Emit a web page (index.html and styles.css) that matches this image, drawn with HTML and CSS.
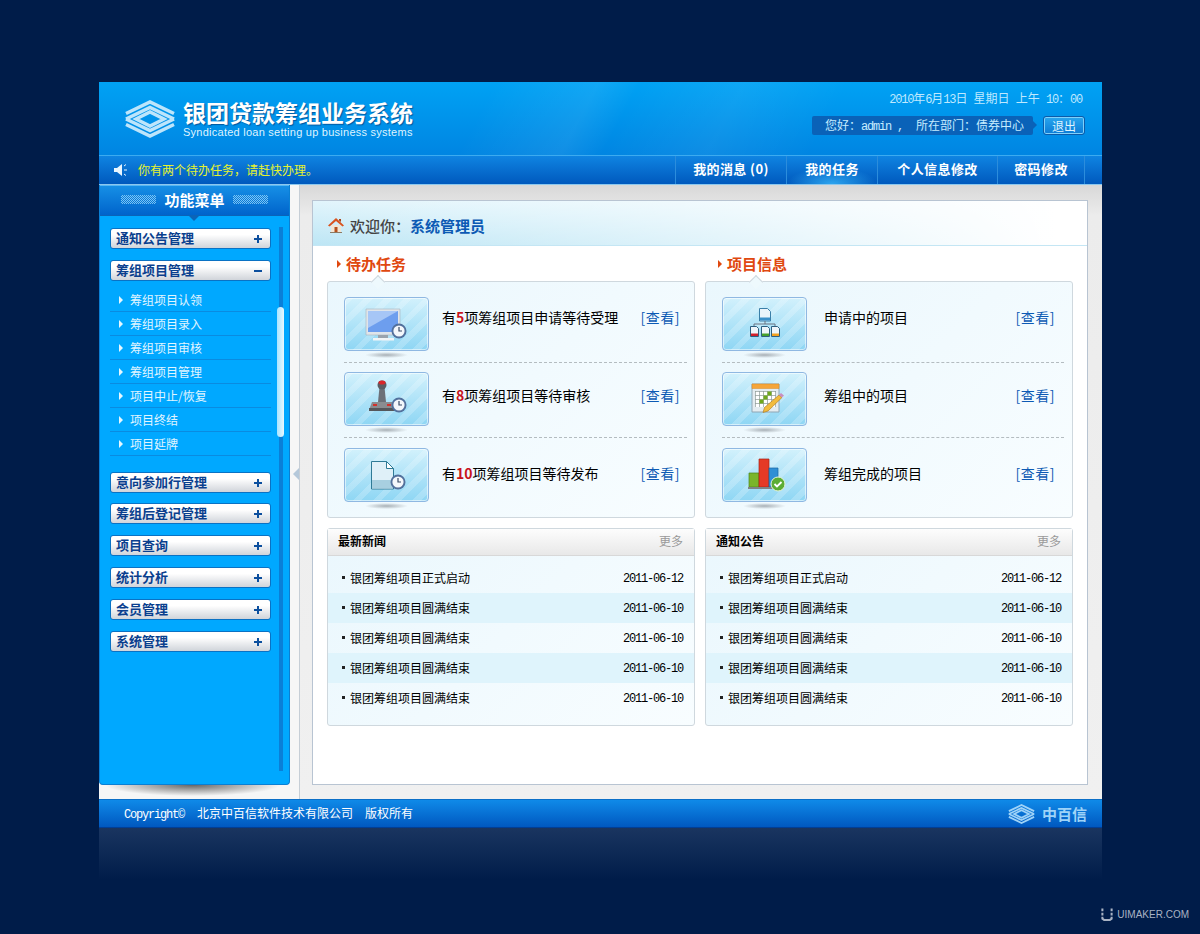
FILE: index.html
```html
<!DOCTYPE html>
<html lang="zh-CN">
<head>
    <meta charset="UTF-8">
    <title>银团贷款筹组业务系统</title>
    <link rel="stylesheet" href="styles.css">
</head>
<body>
    <svg class="defs" width="0" height="0">
        <symbol id="logo" viewBox="0 0 50 38">
            <g fill="none" stroke="currentColor" stroke-width="3.400">
                <path d="M1 13.500L25 2l24 11.500"/>
                <path d="M1 19L25 7.500 49 19"/>
                <path d="M1 24.500L25 36l24-11.500"/>
                <path d="M1 19l24 11.500L49 19"/>
                <path d="M11 19l14-7 14 7-14 7z"/>
            </g>
        </symbol>
        <symbol id="clock" viewBox="0 0 16 16">
            <circle cx="8" cy="8" r="7.500" fill="#52709c"/>
            <circle cx="8" cy="8" r="5.600" fill="#f4f7fb"/>
            <path d="M8 4v4h3" fill="none" stroke="#3a4c68" stroke-width="1.200"/>
        </symbol>
    </svg>

    <div class="app">
        <header class="top">
            <a class="brand">
                <svg class="brand-logo"><use href="#logo"/></svg>
                <div>
                    <div class="brand-name">银团贷款筹组业务系统</div>
                    <div class="brand-en">Syndicated loan setting up business systems</div>
                </div>
            </a>
            <div class="top-right">
                <div class="date"><span class="num">2010</span>年<span class="num">6</span>月<span class="num">13</span>日 星期日 上午 <span class="num">10</span>：<span class="num">00</span></div>
                <div class="user-row">
                    <div class="user">您好：<span class="num">admin ,</span><span class="dept">所在部门：债券中心</span></div>
                    <button class="logout">退出</button>
                </div>
            </div>
        </header>

        <nav class="bar">
            <div class="notice">
                <svg class="speaker" viewBox="0 0 14 14"><path d="M0 5h3l5-4v12l-5-4H0z" fill="#eaf6ff"/><path d="M10 3l2-1.500M10 7h3M10 11l2 1.500" stroke="#eaf6ff" fill="none"/></svg>
                你有两个待办任务，请赶快办理。
            </div>
            <div class="tabs">
                <a class="tab tab-msg">我的消息 (0)</a>
                <a class="tab tab-task active">我的任务</a>
                <a class="tab tab-info">个人信息修改</a>
                <a class="tab tab-pwd">密码修改</a>
            </div>
        </nav>

        <div class="middle">
            <aside class="side">
                <div class="side-box">
                    <div class="side-title"><i class="dots"></i>功能菜单<i class="dots"></i></div>
                    <div class="side-body">
                        <div class="menu">
                            <div class="menu-item">通知公告管理<b class="plus"></b></div>
                            <div class="menu-item">筹组项目管理<b class="minus"></b></div>
                            <ul class="sub">
                                <li>筹组项目认领</li>
                                <li>筹组项目录入</li>
                                <li>筹组项目审核</li>
                                <li>筹组项目管理</li>
                                <li>项目中止/恢复</li>
                                <li>项目终结</li>
                                <li>项目延牌</li>
                            </ul>
                            <div class="menu-item tight">意向参加行管理<b class="plus"></b></div>
                            <div class="menu-item">筹组后登记管理<b class="plus"></b></div>
                            <div class="menu-item">项目查询<b class="plus"></b></div>
                            <div class="menu-item">统计分析<b class="plus"></b></div>
                            <div class="menu-item">会员管理<b class="plus"></b></div>
                            <div class="menu-item">系统管理<b class="plus"></b></div>
                        </div>
                        <div class="track"><div class="thumb"></div></div>
                    </div>
                </div>
                <div class="side-shadow"></div>
            </aside>

            <div class="split"><i class="split-arrow"></i></div>

            <main class="content">
                <div class="panel">
                    <div class="welcome">
                        <svg class="house" viewBox="0 0 16 16">
                            <path d="M3 8h10v8H3z" fill="#f3e6d4"/>
                            <path d="M6.500 10h3v6h-3z" fill="#b5501d"/>
                            <path d="M0 8.500L8 1l8 7.500-1.500 1L8 4 1.500 9.500z" fill="#d9531e"/>
                            <path d="M11 2h2v3l-2-1.500z" fill="#a8431a"/>
                            <path d="M2 15h12v1H2z" fill="#8d7a63"/>
                        </svg>
                        欢迎你：<span class="who">系统管理员</span>
                    </div>

                    <div class="cols">
                        <section>
                            <h3 class="sec-title">待办任务</h3>
                            <div class="box box-task">
                                <div class="row">
                                    <div class="tile">
                                        <svg viewBox="0 0 85 54">
                                            <path d="M22 12h34v26H22z" fill="#dfe5ea" stroke="#a8b2bc" stroke-width=".6"/>
                                            <path d="M24 14h30v21H24z" fill="#6d9eee"/>
                                            <path d="M24 14h30L24 31z" fill="#a6c6f6"/>
                                            <path d="M34 38h10v3H34z" fill="#9aa4ae"/>
                                            <path d="M29 41h21v2.500H29z" fill="#f2f5f7"/>
                                            <use href="#clock" x="47" y="26" width="16" height="16"/>
                                        </svg>
                                    </div>
                                    <div class="txt up-6">有<em>5</em>项筹组项目申请等待受理</div>
                                    <a class="view up-6">[查看]</a>
                                </div>
                                <div class="row">
                                    <div class="tile">
                                        <svg viewBox="0 0 85 54">
                                            <path d="M25 38l3-8h20l3 8z" fill="#8a8c90"/>
                                            <path d="M25 36h26v3H25z" fill="#55575b"/>
                                            <path d="M29 32h4v2h-4zM43 32h4v2h-4z" fill="#d2312c"/>
                                            <path d="M35.500 15h5l1.500 15h-8z" fill="#6c7078"/>
                                            <circle cx="38" cy="13" r="4.500" fill="#5a5d63"/>
                                            <ellipse cx="38" cy="10.500" rx="3.500" ry="2" fill="#d8262a"/>
                                            <use href="#clock" x="47" y="25" width="16" height="16"/>
                                        </svg>
                                    </div>
                                    <div class="txt up-3">有<em>8</em>项筹组项目等待审核</div>
                                    <a class="view up-3">[查看]</a>
                                </div>
                                <div class="row">
                                    <div class="tile">
                                        <svg viewBox="0 0 85 54">
                                            <path d="M27.500 13.500h15l7 7v20.500h-22z" fill="#dff0f8" stroke="#2f7a96"/>
                                            <path d="M28 32h21v8.500H28z" fill="#a8cfe0"/>
                                            <path d="M42.500 13.500v7h7z" fill="#fff" stroke="#2f7a96"/>
                                            <use href="#clock" x="46" y="26" width="16" height="16"/>
                                        </svg>
                                    </div>
                                    <div class="txt up-1">有<em>10</em>项筹组项目等待发布</div>
                                    <a class="view up-1">[查看]</a>
                                </div>
                            </div>
                        </section>

                        <section class="sec-info">
                            <h3 class="sec-title">项目信息</h3>
                            <div class="box box-info">
                                <div class="row">
                                    <div class="tile">
                                        <svg viewBox="0 0 85 54">
                                            <path d="M37.500 11.500h8l3 3v9.500h-11z" fill="#eaf3fa" stroke="#3b7fa8"/>
                                            <path d="M38 20.500h10v3H38z" fill="#3b8fc8"/>
                                            <path d="M43 24v3M32 30v-3h21v3" fill="none" stroke="#6b7280"/>
                                            <path d="M28.500 29.500h6l2 2v8h-8z" fill="#eef5fa" stroke="#2d5f80"/>
                                            <path d="M39.500 29.500h6l2 2v8h-8z" fill="#eef5fa" stroke="#2d5f80"/>
                                            <path d="M49.500 29.500h6l2 2v8h-8z" fill="#eef5fa" stroke="#2d5f80"/>
                                            <path d="M29 36.500h7v2.500h-7z" fill="#d0202c"/>
                                            <path d="M40 36.500h7v2.500h-7z" fill="#46a02c"/>
                                            <path d="M50 36.500h7v2.500h-7z" fill="#f0a020"/>
                                        </svg>
                                    </div>
                                    <div class="txt up-6">申请中的项目</div>
                                    <a class="view up-6">[查看]</a>
                                </div>
                                <div class="row">
                                    <div class="tile">
                                        <svg viewBox="0 0 85 54">
                                            <path d="M30 12h27v28H30z" fill="#e4ecf0" stroke="#8fa6b4"/>
                                            <path d="M30 12h27v4.500H30z" fill="#f5a53a" stroke="#d88a20" stroke-width=".5"/>
                                            <path d="M33 19h21v16H33z" fill="#fff"/>
                                            <path d="M33 19.500h21M33 23.500h21M33 27.500h21M33 31.500h21M33.500 19v16M37.500 19v16M41.500 19v16M45.500 19v16M49.500 19v16M53.500 19v16" stroke="#8c9a96" stroke-width=".7"/>
                                            <path d="M37.500 27.500h4v4h-4zM41.500 23.500h4v4h-4zM45.500 19.500h4v4h-4z" fill="#6fa81c"/>
                                            <path d="M57 23l3 2.500L46 39l-5 1.500 1.500-5z" fill="#f2bb3c" stroke="#a9761c" stroke-width=".6"/>
                                            <path d="M57 23l2-2 3 2.500-2 2z" fill="#c98fc0"/>
                                        </svg>
                                    </div>
                                    <div class="txt up-3">筹组中的项目</div>
                                    <a class="view up-3">[查看]</a>
                                </div>
                                <div class="row">
                                    <div class="tile">
                                        <svg viewBox="0 0 85 54">
                                            <path d="M27 25h10v14H27z" fill="#7ab52a" stroke="#4c8418" stroke-width=".7"/>
                                            <path d="M37 11h10v28H37z" fill="#e53a26" stroke="#a92314" stroke-width=".7"/>
                                            <path d="M47 20h9v19h-9z" fill="#2f8fd6" stroke="#1b64a0" stroke-width=".7"/>
                                            <path d="M26 39h28v2H26z" fill="#7d8587"/>
                                            <circle cx="56" cy="36" r="7" fill="#5cad33" stroke="#e6f3da"/>
                                            <path d="M52.500 36l2.500 2.500 4.500-4.500" fill="none" stroke="#fff" stroke-width="1.800"/>
                                        </svg>
                                    </div>
                                    <div class="txt up-1">筹组完成的项目</div>
                                    <a class="view up-1">[查看]</a>
                                </div>
                            </div>
                        </section>

                        <section class="news">
                            <div class="news-head"><b>最新新闻</b><a>更多</a></div>
                            <ul class="news-list">
                                <li><span>银团筹组项目正式启动</span><time>2011-06-12</time></li>
                                <li><span>银团筹组项目圆满结束</span><time>2011-06-10</time></li>
                                <li><span>银团筹组项目圆满结束</span><time>2011-06-10</time></li>
                                <li><span>银团筹组项目圆满结束</span><time>2011-06-10</time></li>
                                <li><span>银团筹组项目圆满结束</span><time>2011-06-10</time></li>
                            </ul>
                        </section>

                        <section class="news">
                            <div class="news-head"><b>通知公告</b><a>更多</a></div>
                            <ul class="news-list">
                                <li><span>银团筹组项目正式启动</span><time>2011-06-12</time></li>
                                <li><span>银团筹组项目圆满结束</span><time>2011-06-10</time></li>
                                <li><span>银团筹组项目圆满结束</span><time>2011-06-10</time></li>
                                <li><span>银团筹组项目圆满结束</span><time>2011-06-10</time></li>
                                <li><span>银团筹组项目圆满结束</span><time>2011-06-10</time></li>
                            </ul>
                        </section>
                    </div>
                </div>
            </main>
        </div>

        <footer class="foot">
            <div class="foot-text"><span class="num">Copyright©</span><span class="corp">北京中百信软件技术有限公司</span><span class="rights">版权所有</span></div>
            <div class="foot-brand">
                <svg class="foot-logo"><use href="#logo"/></svg>
                <span>中百信</span>
            </div>
        </footer>
    </div>

    <div class="reflect"></div>

    <div class="mark">
        <svg class="mark-u" viewBox="0 0 13 13"><path d="M1.500 0v3M1.500 4.500v3M1.500 9v2l2 1.500h6l2-1.500V9M11.500 7.500v-3M11.500 3V0" fill="none" stroke="#a9b3c4" stroke-width="2.200"/></svg>
        UIMAKER.COM
    </div>
</body>
</html>
```

FILE: styles.css
```css
* {
    box-sizing: border-box;
}
html, body {
    margin: 0;
    height: 100%;
}
body {
    padding-top: 82px;
    background: #001c49;
    color: #000;
    font-family: "Noto Sans CJK SC", "Liberation Sans", sans-serif;
    font-size: 12px;
    overflow: hidden;
}
ul {
    list-style: none;
    margin: 0;
    padding: 0;
}
.defs {
    display: block;
    height: 0;
}
.num {
    font-family: "Liberation Mono", monospace;
    font-size: 12px;
    line-height: 1;
    letter-spacing: -1.2px;
}

.app {
    width: 1003px;
    margin-left: 99px;
}

/* header */
.top {
    height: 73px;
    display: flex;
    justify-content: space-between;
    background:
        linear-gradient(118deg, transparent 38%, rgba(255,255,255,0.07) 48%, transparent 52%, rgba(255,255,255,0.06) 62%, transparent 72%),
        linear-gradient(#00a2f4, #0085e2);
}
.brand {
    display: flex;
    padding: 18px 0 0 26px;
    color: #fff;
}
.brand-logo {
    width: 50px;
    height: 38px;
    margin-right: 8px;
    color: #bde5fb;
}
.brand-name {
    height: 26px;
    font-size: 23px;
    font-weight: 700;
    line-height: 25px;
    text-shadow: 1px 1px 1px rgba(0,50,110,0.6);
}
.brand-en {
    font-family: "Liberation Sans", sans-serif;
    font-size: 11px;
    letter-spacing: 0.25px;
    line-height: 12px;
    color: #dff3ff;
}
.top-right {
    display: flex;
    flex-direction: column;
    align-items: flex-end;
    padding: 8px 17px 0 0;
}
.date {
    height: 16px;
    margin-right: 3px;
    color: #bfe9ff;
    line-height: 16px;
    word-spacing: 3.5px;
}
.user-row {
    display: flex;
    margin-top: 10px;
}
.user {
    position: relative;
    width: 221px;
    height: 19px;
    padding-left: 13px;
    border-radius: 2px;
    background: #0a62b8;
    color: #c6ecff;
    line-height: 18px;
}
.user::after {
    content: "";
    position: absolute;
    right: -4px;
    top: 5px;
    border-left: 4px solid #0a62b8;
    border-top: 4px solid transparent;
    border-bottom: 4px solid transparent;
}
.dept {
    margin-left: 13px;
}
.logout {
    width: 42px;
    height: 19px;
    margin-left: 10px;
    padding: 0;
    border: 1px solid #0c5aa8;
    border-radius: 3px;
    background: linear-gradient(#2aa6ee, #0b7bd6);
    box-shadow: inset 0 0 0 1px #7fd0fa;
    color: #dff4ff;
    font: inherit;
    line-height: 15px;
}

/* notice and tabs */
.bar {
    height: 30px;
    display: flex;
    justify-content: space-between;
    border-top: 1px solid #3cabf0;
    border-bottom: 1px solid #8cc8ee;
    background: linear-gradient(#0f84e2, #0059bd);
}
.notice {
    display: flex;
    align-items: center;
    padding: 0 0 1px 15px;
    color: #e6f32e;
}
.speaker {
    width: 14px;
    height: 14px;
    margin-right: 10px;
}
.tabs {
    display: flex;
    padding-right: 17px;
}
.tab {
    display: flex;
    align-items: center;
    justify-content: center;
    padding-bottom: 3px;
    border-left: 1px solid #2c8ddc;
    color: #fff;
    font-size: 13px;
    font-weight: 700;
    letter-spacing: 0.4px;
}
.tab:last-child {
    border-right: 1px solid #2c8ddc;
}
.tab-msg { width: 111px; }
.tab-task { width: 91px; }
.tab-info { width: 120px; }
.tab-pwd { width: 88px; }
.tab.active {
    background: radial-gradient(ellipse 50% 60% at 50% 100%, rgba(60,190,255,0.75), transparent);
}

/* sidebar */
.middle {
    display: flex;
    height: 614px;
}
.side {
    width: 191px;
    background: #f6f6f6;
}
.side-box {
    height: 600px;
    border: 1px solid #0a7fd4;
    border-top: 0;
    border-radius: 0 0 4px 4px;
    background: #00a8ff;
}
.side-title {
    position: relative;
    height: 31px;
    display: flex;
    align-items: center;
    justify-content: center;
    gap: 8px;
    padding-bottom: 2px;
    border-top: 1px solid #58b7f4;
    border-bottom: 1px solid #0b64b8;
    background: linear-gradient(#168fe6, #0064cb);
    color: #fff;
    font-size: 15px;
    font-weight: 700;
}
.side-title::after {
    content: "";
    position: absolute;
    left: 89px;
    bottom: -6px;
    width: 0;
    border-top: 5px solid #0b64b8;
    border-left: 5px solid transparent;
    border-right: 5px solid transparent;
}
.dots {
    width: 35px;
    height: 9px;
    background: repeating-conic-gradient(rgba(150,215,250,0.8) 0 25%, transparent 0 50%) 0 0 / 2px 2px;
}
.side-body {
    display: flex;
    padding: 12px 0 0 10px;
}
.menu {
    width: 161px;
}
.menu-item {
    height: 21px;
    display: flex;
    align-items: center;
    justify-content: space-between;
    margin-bottom: 11px;
    padding: 0 8px 2px 5px;
    border: 1px solid #0a72c4;
    border-radius: 3px;
    background: linear-gradient(#fff 30%, #d0d4da);
    color: #0a3f8e;
    font-size: 13px;
    font-weight: 700;
}
.menu-item.tight {
    margin-bottom: 10px;
}
.plus, .minus {
    position: relative;
    top: 1px;
    width: 8px;
    height: 2px;
    background: #0c4f9e;
}
.plus::after {
    content: "";
    position: absolute;
    left: 3px;
    top: -3px;
    width: 2px;
    height: 8px;
    background: #0c4f9e;
}
.sub {
    margin: -4px 0 16px;
}
.sub li {
    position: relative;
    height: 24px;
    padding-left: 20px;
    border-bottom: 1px solid #0a8be0;
    color: #e0f5ff;
    line-height: 23px;
}
.sub li::before {
    content: "";
    position: absolute;
    left: 9px;
    top: 8px;
    border-left: 4px solid #e6f7ff;
    border-top: 4px solid transparent;
    border-bottom: 4px solid transparent;
}
.track {
    width: 4px;
    height: 544px;
    margin: -1px 0 0 8px;
    background: #0a7fd8;
}
.thumb {
    width: 7px;
    height: 130px;
    margin: 80px 0 0 -2px;
    border-radius: 4px;
    background: linear-gradient(90deg, #a9e4ff, #eaf9ff);
}
.side-shadow {
    height: 11px;
    margin: 0 10px 0 6px;
    background: radial-gradient(ellipse 50% 100% at 50% 0, #666, transparent);
}
.split {
    position: relative;
    width: 10px;
    background: #f6f6f6;
    border-right: 1px solid #c6ced6;
}
.split-arrow {
    position: absolute;
    left: 3px;
    top: 283px;
    border-right: 6px solid #b4c8da;
    border-top: 6px solid transparent;
    border-bottom: 6px solid transparent;
}

/* main */
.content {
    flex: 1;
    padding: 15px 14px 14px 12px;
    background: linear-gradient(#d8d8d8, #ececec 5%, #f0f0f0);
}
.panel {
    height: 100%;
    border: 1px solid #b8c4d2;
    background: #fff;
}
.welcome {
    height: 45px;
    display: flex;
    align-items: center;
    padding: 4px 0 0 15px;
    border-bottom: 1px solid #c4e6f4;
    background:
        linear-gradient(90deg, transparent, #fff 96%),
        linear-gradient(#e2f5fc, #bde6f5);
    color: #444;
    font-size: 15px;
    font-weight: 500;
}
.house {
    width: 16px;
    height: 16px;
    margin-right: 6px;
}
.who {
    color: #0c5ab4;
    font-weight: 700;
}
.cols {
    display: grid;
    grid-template-columns: 368px 368px;
    column-gap: 10px;
    padding-left: 14px;
}
.sec-title {
    position: relative;
    height: 35px;
    margin: 0;
    padding-left: 19px;
    color: #e0480f;
    font-size: 15px;
    font-weight: 700;
    line-height: 35px;
}
.sec-title::before {
    content: "";
    position: absolute;
    left: 10px;
    top: 14px;
    border-left: 4px solid #e0480f;
    border-top: 4px solid transparent;
    border-bottom: 4px solid transparent;
}
.sec-info .sec-title {
    padding-left: 22px;
}
.sec-info .sec-title::before {
    left: 13px;
}
.box {
    position: relative;
    height: 237px;
    padding: 6px 7px 0 16px;
    border: 1px solid #cfd8de;
    border-radius: 3px;
    background: linear-gradient(135deg, #eaf7fd, #f8fdff);
}
.box::before {
    content: "";
    position: absolute;
    left: 45px;
    top: -5px;
    width: 9px;
    height: 9px;
    background: #eef9fd;
    border-left: 1px solid #cfd8de;
    border-top: 1px solid #cfd8de;
    transform: rotate(45deg);
}
.box-info {
    padding-right: 8px;
}
.row {
    height: 75px;
    display: flex;
    align-items: center;
    padding: 9px 0 11px;
    border-bottom: 1px dashed #b4bcc0;
    font-size: 14px;
}
.row:last-child {
    border-bottom: 0;
}
.tile {
    position: relative;
    width: 85px;
    height: 54px;
    border: 1px solid #8fb8e2;
    border-radius: 4px;
    background:
        repeating-linear-gradient(135deg, rgba(255,255,255,0.2) 0 6px, transparent 6px 14px),
        linear-gradient(#d2f1fc, #8ed6f4);
    box-shadow: inset 0 0 0 1px rgba(255,255,255,0.55);
}
.tile svg {
    display: block;
    width: 85px;
    height: 54px;
    margin: -1px;
}
.tile::after {
    content: "";
    position: absolute;
    left: 20px;
    bottom: -8px;
    width: 43px;
    height: 6px;
    background: radial-gradient(ellipse 50% 50%, #a8b0b6, transparent);
}
.txt {
    flex: 1;
    padding-left: 13px;
}
.box-info .txt {
    padding-left: 17px;
}
.txt em {
    color: #c8141c;
    font-style: normal;
    font-weight: 700;
}
.view {
    padding-right: 7px;
    color: #0c5ab4;
    letter-spacing: 0.5px;
}
.box-info .view {
    padding-right: 9px;
}
.up-6 {
    margin-bottom: 14px;
}
.up-3 {
    margin-bottom: 8px;
}
.up-1 {
    margin-bottom: 3px;
}
.news {
    height: 198px;
    margin-top: 10px;
    border: 1px solid #cfd8de;
    border-radius: 3px;
    background: linear-gradient(135deg, #eaf7fd, #f8fdff);
}
.news-head {
    height: 27px;
    display: flex;
    align-items: center;
    justify-content: space-between;
    padding: 0 11px 3px 10px;
    border-bottom: 1px solid #d8d8d8;
    background: linear-gradient(#fdfdfd, #e8e8e8);
}
.news-head a {
    color: #9a9a9a;
}
.news-list {
    padding-top: 7px;
}
.news-list li {
    position: relative;
    height: 30px;
    display: flex;
    align-items: center;
    justify-content: space-between;
    padding: 0 11px 2px 22px;
}
.news-list li::before {
    content: "";
    position: absolute;
    left: 14px;
    top: 13px;
    width: 3px;
    height: 3px;
    background: #222;
}
.news-list li:nth-child(even) {
    background: #dff4fc;
}
.news-list time {
    padding-top: 3px;
    font-family: "Liberation Mono", monospace;
    font-size: 12px;
    letter-spacing: -1.2px;
}

/* footer */
.foot {
    height: 29px;
    display: flex;
    align-items: center;
    justify-content: space-between;
    padding: 0 15px 0 25px;
    border-top: 1px solid #0b6fc7;
    border-bottom: 1px solid #003f98;
    background: linear-gradient(#0f8ae8, #0058c0);
    color: #fff;
}
.foot-text {
    padding-bottom: 3px;
}
.corp {
    margin-left: 13px;
}
.rights {
    margin-left: 12px;
}
.foot-brand {
    display: flex;
    align-items: center;
    color: #9ed3f8;
    font-size: 15px;
    font-weight: 700;
}
.foot-logo {
    width: 27px;
    height: 20px;
    margin-right: 7px;
    color: #9ed3f8;
}
.reflect {
    width: 1003px;
    height: 52px;
    margin-left: 99px;
    background: linear-gradient(#1a3560, #001c49);
}
.mark {
    display: flex;
    align-items: center;
    justify-content: flex-end;
    margin-top: 28px;
    padding-right: 11px;
    color: #a9b3c4;
    font-family: "Liberation Sans", sans-serif;
    font-size: 10px;
}
.mark-u {
    width: 12px;
    height: 13px;
    margin-right: 4px;
}
```
